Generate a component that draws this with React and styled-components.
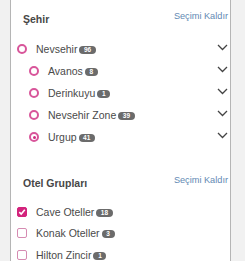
import React from 'react'
import styled, { createGlobalStyle } from 'styled-components'

const GlobalStyle = createGlobalStyle`
    html, body {
        margin: 0;
        padding: 0;
        background: #f1f1f1;
        font-family: "Liberation Sans", Arial, sans-serif;
    }
`

const cities = [
    { name: 'Nevsehir', count: 96, level: 0, selected: false },
    { name: 'Avanos', count: 8, level: 1, selected: false },
    { name: 'Derinkuyu', count: 1, level: 1, selected: false },
    { name: 'Nevsehir Zone', count: 39, level: 1, selected: false },
    { name: 'Urgup', count: 41, level: 1, selected: true },
]

const groups = [
    { name: 'Cave Oteller', count: 18, checked: true },
    { name: 'Konak Oteller', count: 3, checked: false },
    { name: 'Hilton Zincir', count: 1, checked: false },
]

function Chevron() {
    return (
        <ChevronIcon width="11" height="7" viewBox="0 0 11 7">
            <path d="M1 1 L5.5 5.5 L10 1" fill="none" stroke="#444" strokeWidth="1.3" />
        </ChevronIcon>
    )
}

function Check() {
    return (
        <svg width="8" height="8" viewBox="0 0 8 8">
            <path d="M1.3 4.2 L3.2 6 L6.8 1.8" fill="none" stroke="#fff" strokeWidth="1.6" />
        </svg>
    )
}

function App() {
    return (
        <>
            <GlobalStyle />
            <Panel>
                <Section>
                    <Header>
                        <Title>Şehir</Title>
                        <Clear>Seçimi Kaldır</Clear>
                    </Header>
                    <List>
                        {cities.map((c) => (
                            <Row key={c.name} level={c.level}>
                                <Radio selected={c.selected} />
                                <Label>{c.name}</Label>
                                <Badge>{c.count}</Badge>
                                <Chevron />
                            </Row>
                        ))}
                    </List>
                </Section>
                <Section second>
                    <Header>
                        <Title>Otel Grupları</Title>
                        <Clear>Seçimi Kaldır</Clear>
                    </Header>
                    <List tight>
                        {groups.map((g) => (
                            <Row key={g.name} tight>
                                <Checkbox checked={g.checked}>{g.checked && <Check />}</Checkbox>
                                <Label>{g.name}</Label>
                                <Badge>{g.count}</Badge>
                            </Row>
                        ))}
                    </List>
                </Section>
            </Panel>
        </>
    )
}

export default App

const Panel = styled.div`
    margin-left: 10px;
    width: 221px;
    box-sizing: border-box;
    height: 261px;
    overflow: hidden;
    background: #fff;
    border-left: 1px solid #b5b5b5;
    border-right: 1px solid #b5b5b5;
`

const Section = styled.div`
    padding: ${(p) => (p.second ? '27px' : '11px')} 2px 0 6px;
`

const Header = styled.div`
    display: flex;
    justify-content: space-between;
    align-items: flex-start;
    padding-left: 6px;
`

const Title = styled.div`
    font-size: 10.5px;
    line-height: 16px;
    font-weight: bold;
    color: #474747;
`

const Clear = styled.a`
    font-size: 9.2px;
    line-height: 11px;
    color: #6289b3;
    cursor: pointer;
`

const List = styled.div`
    margin-top: ${(p) => (p.tight ? 10 : 11)}px;
    display: flex;
    flex-direction: column;
`

const Row = styled.div`
    height: ${(p) => (p.tight ? 21.6 : 22)}px;
    display: flex;
    align-items: center;
    padding-left: ${(p) => (p.level ? p.level * 12 : 0)}px;
`

const Radio = styled.span`
    width: 10px;
    height: 10px;
    box-sizing: border-box;
    border-radius: 50%;
    border: 2px solid #d8559a;
    flex-shrink: 0;
    display: flex;
    align-items: center;
    justify-content: center;
    &::after {
        content: "";
        display: ${(p) => (p.selected ? 'block' : 'none')};
        width: 3px;
        height: 3px;
        border-radius: 50%;
        background: #d02c80;
    }
`

const Checkbox = styled.span`
    width: 10px;
    height: 10px;
    box-sizing: border-box;
    border-radius: 2px;
    flex-shrink: 0;
    display: flex;
    align-items: center;
    justify-content: center;
    background: ${(p) => (p.checked ? '#d3237c' : '#fff')};
    border: 1px solid ${(p) => (p.checked ? '#d3237c' : '#d68bb2')};
`

const Label = styled.span`
    margin-left: 9px;
    font-size: 10.5px;
    color: #4a4a4a;
`

const Badge = styled.span`
    margin-left: 2px;
    margin-top: 2px;
    height: 8px;
    padding: 0 4.5px;
    min-width: 4px;
    border-radius: 4px;
    background: #6b6b6b;
    color: #fff;
    font-size: 6.5px;
    font-weight: bold;
    line-height: 8px;
    text-align: center;
`

const ChevronIcon = styled.svg`
    margin-left: auto;
    margin-bottom: 3px;
`
